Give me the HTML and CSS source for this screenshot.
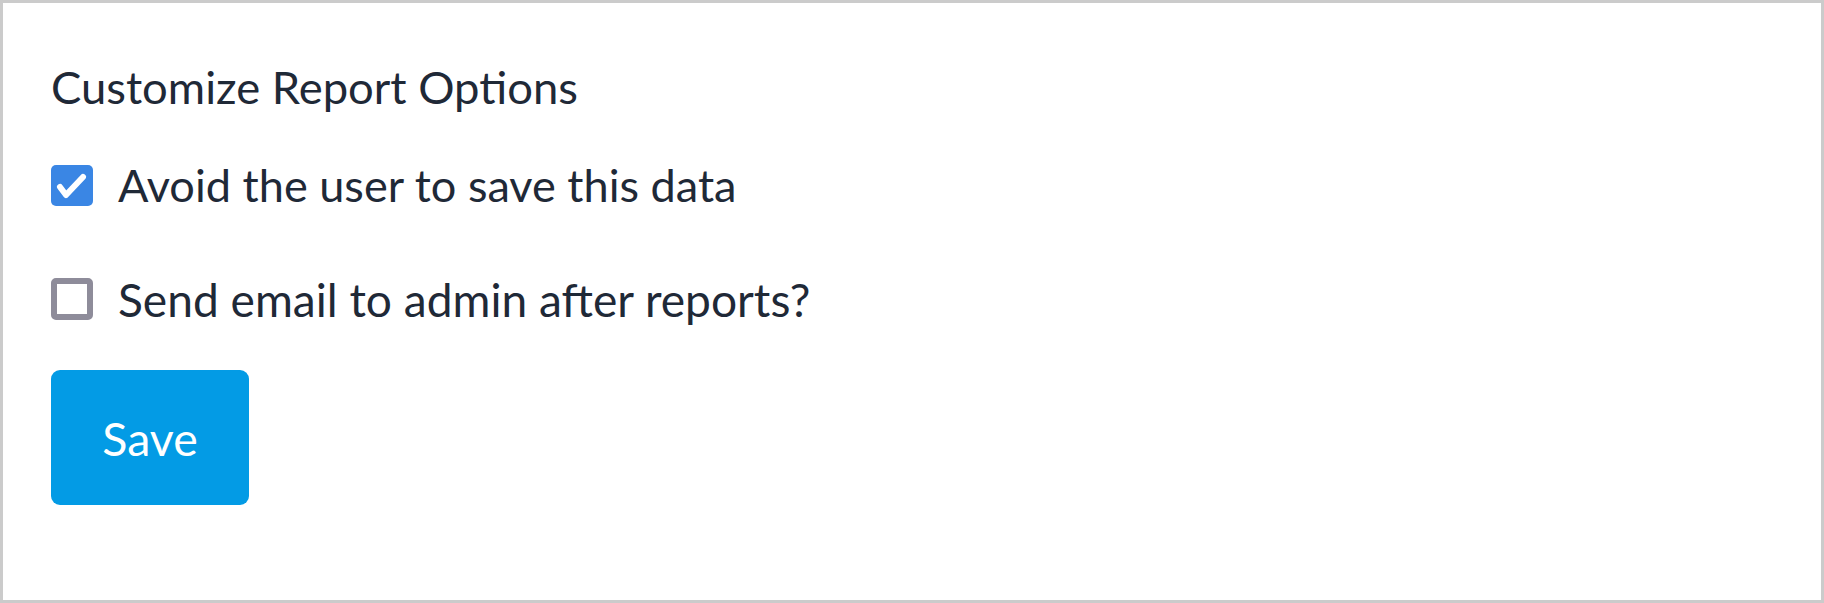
FILE: index.html
```html
<!DOCTYPE html>
<html>
<head>
<meta charset="utf-8">
<link rel="stylesheet" href="styles.css">
</head>
<body>
<div class="card">
  <h2 class="title">Customize Report Options</h2>
  <label class="option option-first">
    <span class="box box-checked">
      <svg width="42" height="41" viewBox="0 0 42 41"><path d="M9 22 L15 30 L32 12" fill="none" stroke="#fff" stroke-width="6" stroke-linecap="round" stroke-linejoin="round"/></svg>
    </span>
    <span class="label">Avoid the user to save this data</span>
  </label>
  <label class="option option-second">
    <span class="box box-empty"></span>
    <span class="label">Send email to admin after reports?</span>
  </label>
  <button class="save">Save</button>
</div>
</body>
</html>
```
FILE: styles.css
```css
html, body {
  margin: 0;
  padding: 0;
  background: #fff;
}
.card {
  box-sizing: border-box;
  width: 1824px;
  height: 603px;
  border: 3px solid #cbcbcb;
  padding: 0 0 0 48px;
  display: flex;
  flex-direction: column;
  align-items: flex-start;
  font-family: Lato, "Liberation Sans", sans-serif;
  color: #1f2937;
}
.title {
  margin: 54px 0 0 0;
  font-size: 45.4px;
  font-weight: 400;
  line-height: 60px;
}
.option {
  display: flex;
  align-items: center;
  gap: 25px;
  font-size: 45.1px;
  line-height: 56px;
}
.option-first {
  margin-top: 40px;
}
.option-second {
  margin-top: 58px;
}
.box {
  box-sizing: border-box;
  width: 42px;
  height: 41px;
  border-radius: 5px;
  flex: none;
  display: flex;
}
.box-checked {
  background: #3a86e4;
}
.box-empty {
  border: 6px solid #8e8c9a;
  height: 42px;
}
.option-second .label {
  font-size: 46.1px;
}
.save {
  margin-top: 43px;
  width: 198px;
  height: 135px;
  border: none;
  border-radius: 9px;
  background: #039be5;
  color: #fff;
  font-family: Lato, "Liberation Sans", sans-serif;
  font-size: 46.5px;
  padding: 0;
}
```
